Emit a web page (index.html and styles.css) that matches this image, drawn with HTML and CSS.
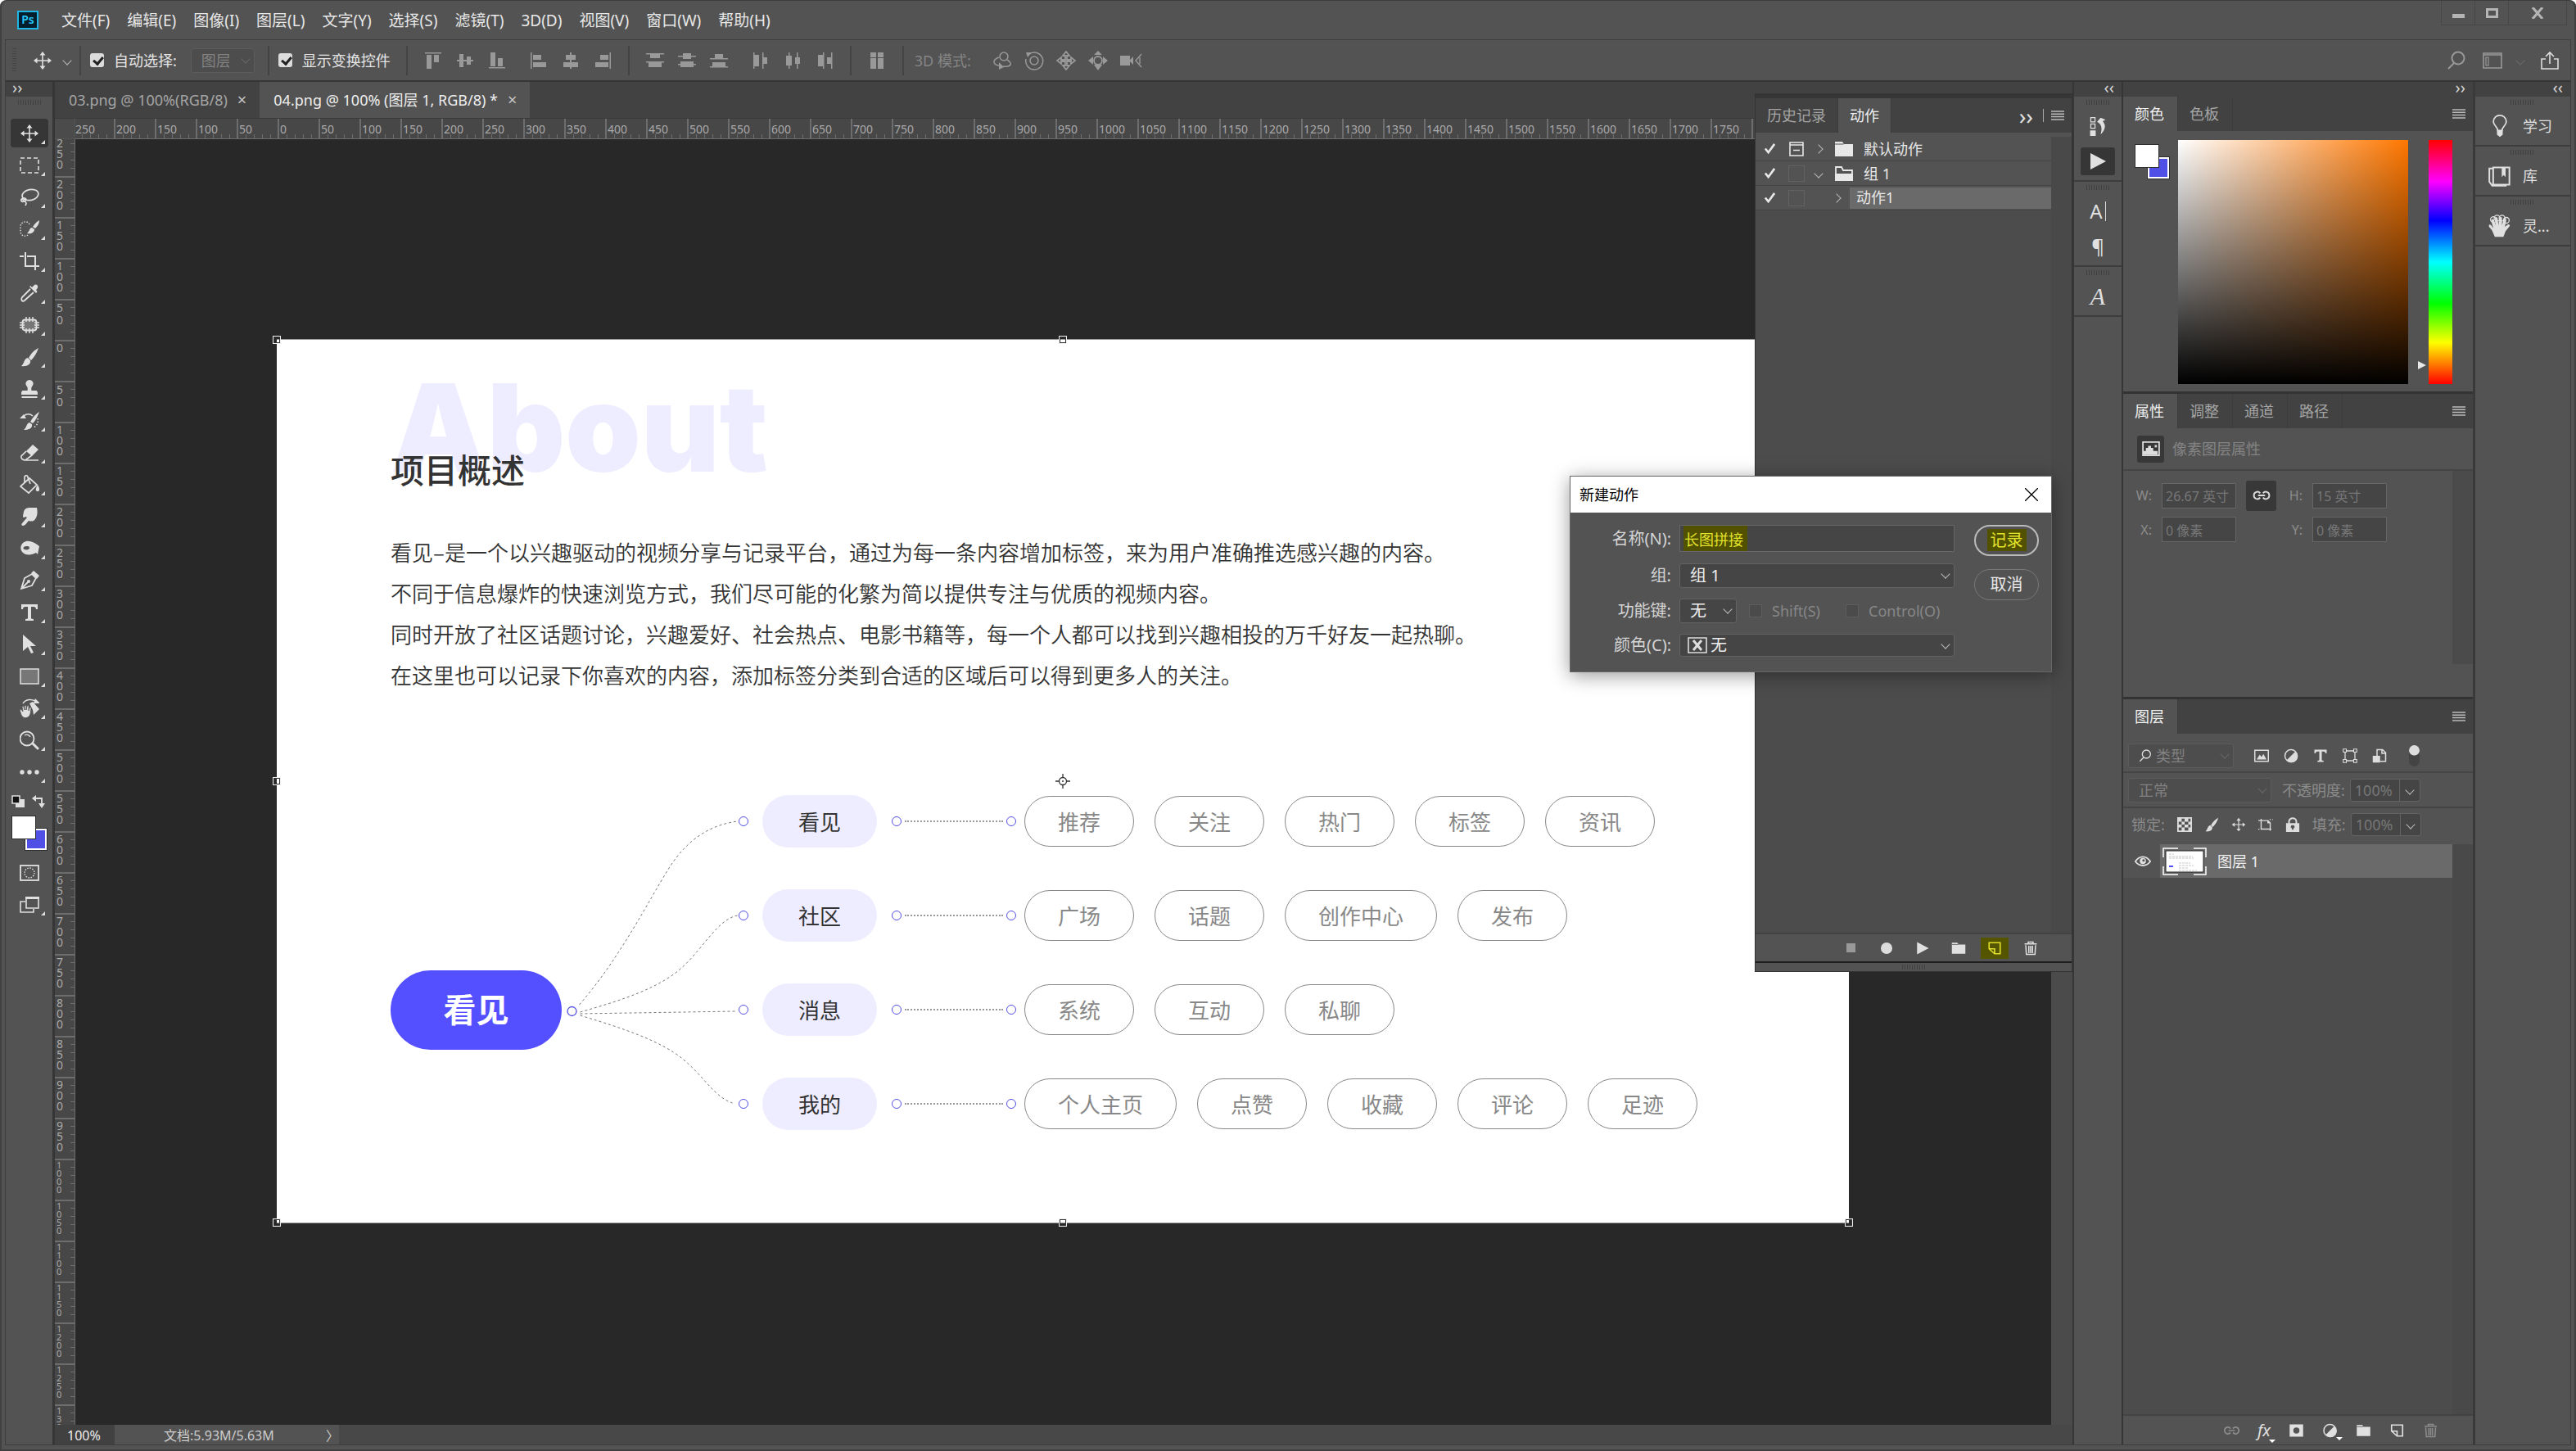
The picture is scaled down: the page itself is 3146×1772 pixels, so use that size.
FILE: index.html
```html
<!DOCTYPE html>
<html lang="zh-CN">
<head>
    <meta charset="UTF-8">
    <meta name="viewport" content="width=device-width, initial-scale=1.0">
    <title>04.png @ 100% (图层 1, RGB/8) *</title>
    <link rel="stylesheet" href="styles.css">
</head>
<body>
    <svg class="sprite" aria-hidden="true">
        <symbol id="i-move" viewBox="0 0 24 24"><path fill="none" stroke="currentColor" stroke-width="1.6" d="M12 3v18M3 12h18"/><path fill="currentColor" d="M12 1l3.5 4.5h-7zM12 23l3.5-4.5h-7zM1 12l4.5-3.5v7zM23 12l-4.5-3.5v7z"/></symbol>
        <symbol id="i-marquee" viewBox="0 0 24 24"><rect x="1" y="3" width="22" height="18" fill="none" stroke="currentColor" stroke-width="1.6" stroke-dasharray="5 3"/></symbol>
        <symbol id="i-lasso" viewBox="0 0 24 24"><g fill="none" stroke="currentColor" stroke-width="1.7"><ellipse cx="13" cy="9" rx="10" ry="6.5" transform="rotate(-12 13 9)"/><path d="M4 13c-4 2-2 5 1 4s4-3 1-4-3 3 0 4 2 3 1 5"/></g></symbol>
        <symbol id="i-quick" viewBox="0 0 24 24"><path fill="none" stroke="currentColor" stroke-width="1.4" stroke-dasharray="1.5 1.7" d="M12 6c-2-5-11-4-11 3v5c0 7 7 7 9 5"/><path fill="currentColor" d="M24 1c-4 2-6 5-8 8l3 2c3-3 5-6 5-10zM15 10c-3 0-3 5-6 7 5 1 9-1 9-5z"/></symbol>
        <symbol id="i-crop" viewBox="0 0 24 24"><path fill="none" stroke="currentColor" stroke-width="2" d="M0 6h5M7 1v17h11M9 6h10v17M20 18h5"/></symbol>
        <symbol id="i-dropper" viewBox="0 0 24 24"><path fill="none" stroke="currentColor" stroke-width="1.8" d="M13 7L3 17c-2 3 0 6 3 4L17 11"/><path fill="currentColor" d="M12 4l8 8 1.5-2-1.5-2c4-3 2-8-2-6l-3 3-1.5-2z"/></symbol>
        <symbol id="i-patch" viewBox="0 0 24 24"><rect x="3.5" y="5.5" width="17" height="13" rx="3" fill="#777" stroke="currentColor" stroke-width="1.8"/><path stroke="currentColor" stroke-width="1.5" d="M8 2v6M12 2v6M16 2v6M8 16v6M12 16v6M16 16v6M0 9h6M0 12h6M0 15h6M18 9h6M18 12h6M18 15h6"/></symbol>
        <symbol id="i-brush" viewBox="0 0 24 24"><path fill="currentColor" d="M23 1c-6 3-9 7-12 12l3 3c4-4 7-9 9-15zM10 13c-5 1-4 7-8 10 7 1 12-2 11-7z"/></symbol>
        <symbol id="i-stamp" viewBox="0 0 24 24"><path fill="currentColor" d="M12 1a4.5 4.5 0 0 1 3.5 7.5c-1.5 2-1.5 3-1 5.5H20q2 0 2 4v1H2v-1q0-4 2-4h5.5c.5-2.5.5-3.5-1-5.5A4.5 4.5 0 0 1 12 1zM2.5 21h19v2h-19z"/></symbol>
        <symbol id="i-history" viewBox="0 0 24 24"><path fill="currentColor" d="M24 1c-5 3-8 7-11 12l3 2c4-4 6-9 8-14zM12 14c-4 1-3 6-7 9 6 0 11-2 10-7zM0 9l5-5 3 5z"/><path fill="none" stroke="currentColor" stroke-width="1.4" d="M5 6c3-3 8-3 11 0"/><path fill="none" stroke="currentColor" stroke-width="1.6" stroke-dasharray="1.5 2" d="M22 9c1 5-1 9-5 11"/></symbol>
        <symbol id="i-eraser" viewBox="0 0 24 24"><path fill="currentColor" d="M16 2l7 6-8 8-7-6z"/><path fill="none" stroke="currentColor" stroke-width="1.7" d="M8 10l-6 6c-1 3 2 5 5 5l8-6M7 21h16"/></symbol>
        <symbol id="i-bucket" viewBox="0 0 24 24"><path fill="none" stroke="currentColor" stroke-width="1.7" d="M12 4L1 14l10 8 10-10zM6 9V3c0-3 4-3 4 0l3 8"/><path fill="currentColor" d="M22 12c3 5 3 8 0 8s-3-3 0-8z"/></symbol>
        <symbol id="i-smudge" viewBox="0 0 24 24"><path fill="currentColor" d="M5 6c1-4 4-5 8-5h8c1 5 1 10-2 14-2 3-5 3-8 2-2 2-4 6-7 6-2 0-2-2-1-3l6-7-2-1c-2 2-3 1-3-1z"/></symbol>
        <symbol id="i-burn" viewBox="0 0 24 24"><path fill="currentColor" fill-rule="evenodd" d="M8 3c5-1 11 2 16 6l-2 10-2-2c-5 3-13 4-17-1C-1 10 3 4 8 3zm0 6c-3 0-5 3-2 4s6 0 6-2-2-2-4-2z"/></symbol>
        <symbol id="i-pen" viewBox="0 0 24 24"><path fill="none" stroke="currentColor" stroke-width="1.8" d="M2 22l4-13 9-5 5 5-5 9zM2 22l8-8"/><circle cx="11" cy="13" r="2" fill="currentColor"/><path fill="currentColor" d="M14 3l3-3 7 6-3 4z"/></symbol>
        <symbol id="i-type" viewBox="0 0 24 24"><path fill="currentColor" d="M2 2h20v6h-2q0-3-3-3h-3v14q0 1 3 1v2H7v-2q3 0 3-1V5H7Q4 5 4 8H2z"/></symbol>
        <symbol id="i-arrow" viewBox="0 0 24 24"><path fill="currentColor" d="M4 0l16 14h-7l4 8-3 1-4-8-6 5z"/></symbol>
        <symbol id="i-rect" viewBox="0 0 24 24"><rect x="1" y="3" width="22" height="18" fill="#777" stroke="currentColor" stroke-width="1.5"/></symbol>
        <symbol id="i-rotate" viewBox="0 0 24 24"><path fill="none" stroke="currentColor" stroke-width="1.5" d="M4 6c4-6 11-5 15-3"/><path fill="currentColor" d="M19 0l6 6h-8zM12 6l4-2 8 9-7 7-1-6z"/><path fill="currentColor" stroke="#535353" stroke-width=".8" d="M0 14q2-2 4 2l-1-6q1-2 2 0l1 4V9q1-2 2 0v5l1-5q2-1 2 0v6l1-4q2-1 2 1l-1 7c-2 6-9 6-11 1z"/></symbol>
        <symbol id="i-zoom" viewBox="0 0 24 24"><g fill="none" stroke="currentColor"><circle cx="9" cy="10" r="8.5" stroke-width="1.8"/><path stroke-width="1.4" d="M6 6c3-2 6 0 7 2"/><path stroke-width="3" stroke-linecap="round" d="M16 16l6 6"/></g></symbol>
        <symbol id="i-dots" viewBox="0 0 24 24"><g fill="currentColor"><circle cx="3" cy="12" r="2.7"/><circle cx="12" cy="12" r="2.7"/><circle cx="21" cy="12" r="2.7"/></g></symbol>
        <symbol id="i-reset" viewBox="0 0 16 16"><path fill="currentColor" d="M5 5h11v10H5z"/><path fill="#111" stroke="currentColor" stroke-width="1.5" d="M1 1h9v9H1z"/></symbol>
        <symbol id="i-swap" viewBox="0 0 16 16"><path fill="none" stroke="currentColor" stroke-width="1.8" d="M4 4h8v8"/><path fill="currentColor" d="M0 4l5-4v8zM12 16L8 10h8z"/></symbol>
        <symbol id="i-mask" viewBox="0 0 24 24"><rect x="1" y="3" width="22" height="18" fill="none" stroke="currentColor" stroke-width="1.8"/><circle cx="12" cy="12" r="6" fill="none" stroke="currentColor" stroke-width="1.4" stroke-dasharray="1.5 1.6"/></symbol>
        <symbol id="i-screen" viewBox="0 0 24 24"><path fill="none" stroke="currentColor" stroke-width="1.6" d="M7 8H1v13h16v-4"/><path fill="#535353" stroke="currentColor" stroke-width="1.6" d="M8 3h15v13H8z"/><path fill="currentColor" d="M7 2h17v3H7z"/></symbol>
        <!-- align and distribute -->
        <symbol id="i-al-top" viewBox="0 0 24 24"><path fill="currentColor" d="M2 2h20v1.5H2zM4 5h6v17H4zM13 5h6v9h-6z"/></symbol>
        <symbol id="i-al-mid" viewBox="0 0 24 24"><path fill="currentColor" d="M2 11h20v2H2zM5 4h5v16H5zM14 7h5v10h-5z"/></symbol>
        <symbol id="i-al-bot" viewBox="0 0 24 24"><path fill="currentColor" d="M2 20h20v1.5H2zM4 2h6v17H4zM13 9h6v10h-6z"/></symbol>
        <symbol id="i-al-left" viewBox="0 0 24 24"><path fill="currentColor" d="M2 2h1.5v20H2zM5 5h10v6H5zM5 14h16v6H5z"/></symbol>
        <symbol id="i-al-cen" viewBox="0 0 24 24"><path fill="currentColor" d="M11 2h2v20h-2zM6 5h12v6H6zM3 14h18v6H3z"/></symbol>
        <symbol id="i-al-right" viewBox="0 0 24 24"><path fill="currentColor" d="M20.5 2H22v20h-1.5zM9 5h10v6H9zM3 14h16v6H3z"/></symbol>
        <symbol id="i-ds-top" viewBox="0 0 24 24"><path fill="currentColor" d="M1 3h22v1.5H1zM6 4h12v5H6zM1 13h22v1.5H1zM4 14h16v6H4z"/></symbol>
        <symbol id="i-ds-mid" viewBox="0 0 24 24"><path fill="currentColor" d="M1 6h22v1.5H1zM7 3h10v7H7zM1 16h22v1.5H1zM4 13h16v7H4z"/></symbol>
        <symbol id="i-ds-bot" viewBox="0 0 24 24"><path fill="currentColor" d="M1 9h22v1.5H1zM7 4h10v6H7zM1 19h22v1.5H1zM4 14h16v6H4z"/></symbol>
        <symbol id="i-ds-left" viewBox="0 0 24 24"><path fill="currentColor" d="M3 2h1.5v20H3zM4 5h6v14H4zM14 2h1.5v20H14zM15 8h5v8h-5z"/></symbol>
        <symbol id="i-ds-cen" viewBox="0 0 24 24"><path fill="currentColor" d="M7 2h1.5v20H7zM4 6h7v12H4zM17 2h1.5v20H17zM15 8h6v8h-6z"/></symbol>
        <symbol id="i-ds-right" viewBox="0 0 24 24"><path fill="currentColor" d="M10 2h1.5v20H10zM4 5h6v14H4zM20 2h1.5v20H20zM15 8h5v8h-5z"/></symbol>
        <symbol id="i-auto" viewBox="0 0 24 24"><path fill="currentColor" d="M4 2h7v6H4zM13 2h7v6h-7zM4 9h7v13H4zM13 9h7v13h-7z"/></symbol>
        <symbol id="i-3d-orbit" viewBox="0 0 24 24"><g fill="none" stroke="currentColor" stroke-width="1.5"><circle cx="14" cy="7" r="5"/><path d="M8 8c-8 3-8 9 0 10M18 11c8 5 4 9-5 8"/></g><path fill="currentColor" d="M8 14v9l6-3z"/></symbol>
        <symbol id="i-3d-roll" viewBox="0 0 24 24"><g fill="none" stroke="currentColor" stroke-width="1.5"><circle cx="12" cy="12" r="5"/><path d="M6 4a10.5 10.5 0 1 1-4 6"/></g><path fill="currentColor" d="M2 2h7l-5 6z"/></symbol>
        <symbol id="i-3d-pan" viewBox="0 0 24 24"><path fill="none" stroke="currentColor" stroke-width="1.8" d="M12 1l4 5h-3v5h5V8l5 4-5 4v-3h-5v5h3l-4 5-4-5h3v-5H6v3l-5-4 5-4v3h5V6H8z"/></symbol>
        <symbol id="i-3d-slide" viewBox="0 0 24 24"><circle cx="12" cy="12" r="5" fill="none" stroke="currentColor" stroke-width="1.8"/><path fill="currentColor" d="M12 0l5 5H7zM12 24l5-7H7zM0 12l6-5v10zM24 12l-6-5v10z"/></symbol>
        <symbol id="i-3d-cam" viewBox="0 0 28 24"><path fill="currentColor" d="M0 6h12v12H0zM11 12l5-5v10z"/><path fill="none" stroke="currentColor" stroke-width="1.4" d="M26 4l-7 8 7 8M24 8v8"/></symbol>
        <symbol id="i-search" viewBox="0 0 24 24"><g fill="none" stroke="currentColor" stroke-width="2"><circle cx="14" cy="9" r="7.5"/><path d="M9 15l-7 7"/></g></symbol>
        <symbol id="i-space" viewBox="0 0 24 24"><path fill="none" stroke="currentColor" stroke-width="1.6" d="M1 3h22v18H1zM1 5h22"/><path fill="none" stroke="currentColor" stroke-width="1.2" d="M4 8h3v10H4z"/></symbol>
        <symbol id="i-share" viewBox="0 0 24 24"><path fill="none" stroke="currentColor" stroke-width="1.6" d="M7 10H2v12h20V10h-5M12 16V2M7 7l5-5 5 5"/></symbol>
        <symbol id="i-folder" viewBox="0 0 24 24"><path fill="currentColor" d="M1 3h9l2 3h11v15H1z"/><path fill="#535353" d="M1 5.5h11l-.7 1H1z"/></symbol>
        <symbol id="i-folder-open" viewBox="0 0 24 24"><path fill="none" stroke="currentColor" stroke-width="1.8" d="M2 13V4h7l2 4h11v5"/><path fill="currentColor" d="M1 12h22v9H1z"/></symbol>
        <symbol id="i-menu" viewBox="0 0 16 12"><path stroke="currentColor" stroke-width="1.5" d="M0 1h16M0 4.3h16M0 7.6h16M0 11h16"/></symbol>
        <symbol id="i-check" viewBox="0 0 16 16"><path fill="none" stroke="currentColor" stroke-width="2.8" d="M2 8l4 5 8-11"/></symbol>
        <symbol id="i-dialogbox" viewBox="0 0 20 20"><path fill="none" stroke="currentColor" stroke-width="1.6" d="M2 2h16v16H2zM2 5h16M6 11.5h8"/></symbol>
        <symbol id="i-hist-panel" viewBox="0 0 24 28"><path fill="none" stroke="currentColor" stroke-width="1.5" d="M2 2h6v6H2zM2 11h6v6H2z"/><path fill="currentColor" d="M1 20h8v8H1zM11 8l5-6 7 3-4 2c5 6 4 12-3 19 2-7 2-12-2-16z"/></symbol>
        <symbol id="i-play" viewBox="0 0 24 24"><path fill="currentColor" d="M3 2l19 10L3 22z"/></symbol>
        <symbol id="i-new" viewBox="0 0 24 24"><path fill="none" stroke="currentColor" stroke-width="2.2" d="M3 3h18v18h-9l-9-8zM3 13h9v8"/></symbol>
        <symbol id="i-trash" viewBox="0 0 24 24"><path fill="none" stroke="currentColor" stroke-width="2" d="M2 5h20M8 5V2h8v3M4 7l1 15h14l1-15M9 8v12M12 8v12M15 8v12"/></symbol>
        <symbol id="i-bulb" viewBox="0 0 24 32"><path fill="none" stroke="currentColor" stroke-width="2" d="M9 22c0-5-6-7-6-12 0-12 18-12 18 0 0 5-6 7-6 12z"/><path fill="currentColor" d="M8 22h8v6l-4 3-4-3z"/></symbol>
        <symbol id="i-book" viewBox="0 0 24 24"><g fill="none" stroke="currentColor" stroke-width="1.7"><path d="M5 3h17v18H5zM5 4H1v14l3 4h15"/></g><path fill="currentColor" d="M14 3h4v10l-2-2-2 2z"/></symbol>
        <symbol id="i-hand" viewBox="0 0 32 32"><path fill="currentColor" d="M9 31l-4-9-4-5c-1-3 1-4 3-2l3 4-3-10c0-3 3-4 4-1l2 7-1-9c0-3 4-3 4 0l1 9 1-10c0-3 4-2 4 0v10l2-8c1-3 4-2 4 1l-2 9 4-3c2-1 4 1 2 3l-5 6-3 8z"/><g fill="none" stroke="currentColor" stroke-width="1.5"><circle cx="7" cy="7" r="4"/><circle cx="12" cy="5" r="4"/><circle cx="19" cy="5" r="4"/><circle cx="25" cy="8" r="4"/></g></symbol>
        <symbol id="i-pic" viewBox="0 0 24 20"><path fill="none" stroke="currentColor" stroke-width="2" d="M1 1h22v18H1z"/><path fill="currentColor" d="M2 18v-5h3V9h3V6h4v3h3v4h6v5zM17 5h3v3h-3z"/></symbol>
        <symbol id="i-link" viewBox="0 0 24 14"><g fill="none" stroke="currentColor" stroke-width="2.2"><path d="M10 4C7 0 1 2 1 7s6 7 9 3M14 4c3-4 9-2 9 3s-6 7-9 3M7 7h10"/></g></symbol>
        <symbol id="i-f-pixel" viewBox="0 0 24 20"><path fill="none" stroke="currentColor" stroke-width="2" d="M1 1h22v18H1z"/><path fill="currentColor" d="M4 16l5-8 3 4 3-5 5 9z"/></symbol>
        <symbol id="i-adjust" viewBox="0 0 24 24"><circle cx="12" cy="12" r="10" fill="none" stroke="currentColor" stroke-width="2"/><path fill="currentColor" d="M19 5A10 10 0 1 1 5 19z"/></symbol>
        <symbol id="i-shape" viewBox="0 0 24 24"><path fill="none" stroke="currentColor" stroke-width="1.7" d="M4 4h16v16H4z"/><path fill="#535353" stroke="currentColor" stroke-width="1.5" d="M1 1h5v5H1zM18 1h5v5h-5zM1 18h5v5H1zM18 18h5v5h-5z"/></symbol>
        <symbol id="i-smart" viewBox="0 0 24 24"><path fill="none" stroke="currentColor" stroke-width="2" d="M8 12V2h9l5 5v14h-9M16 2v6h6"/><path fill="currentColor" d="M1 12h12v11H1z"/></symbol>
        <symbol id="i-checker" viewBox="0 0 20 20"><path fill="none" stroke="currentColor" stroke-width="2" d="M1 1h18v18H1z"/><path fill="currentColor" d="M1 1h5v5H1zM10 1h5v5h-5zM6 6h4v4H6zM15 6h4v4h-4zM1 10h5v4H1zM10 10h5v4h-5zM6 14h4v5H6zM15 14h4v5h-4z"/></symbol>
        <symbol id="i-artboard" viewBox="0 0 26 22"><path fill="none" stroke="currentColor" stroke-width="2" d="M0 4h17l4 4v11H5V1M21 14v8"/><path fill="currentColor" d="M16 3v6h6z"/><path stroke="currentColor" stroke-width="1.8" stroke-dasharray="2 3" d="M20 2h6M0 19h5M21 19h5"/></symbol>
        <symbol id="i-lock" viewBox="0 0 20 20"><path fill="none" stroke="currentColor" stroke-width="2.2" d="M5 9V6c0-6 10-6 10 0v3"/><path fill="currentColor" fill-rule="evenodd" d="M1 8h18v12H1zm9 3a2 2 0 0 0-1 4v2h2v-2a2 2 0 0 0-1-4z"/></symbol>
        <symbol id="i-eye" viewBox="0 0 24 16"><path fill="none" stroke="currentColor" stroke-width="2.2" d="M1 8c6-9 16-9 22 0-6 8-16 8-22 0z"/><circle cx="12" cy="7.5" r="4.5" fill="currentColor"/><circle cx="13" cy="6.5" r="1.8" fill="#535353"/></symbol>
        <symbol id="i-addmask" viewBox="0 0 24 24"><path fill="currentColor" fill-rule="evenodd" d="M1 2h22v20H1zm11 5a5 5 0 1 0 0 10 5 5 0 0 0 0-10z"/></symbol>
    </svg>

    <header class="titlebar">
        <div class="logo">Ps</div>
        <nav class="menu">
            <a href="#">文件(F)</a>
            <a href="#">编辑(E)</a>
            <a href="#">图像(I)</a>
            <a href="#">图层(L)</a>
            <a href="#">文字(Y)</a>
            <a href="#">选择(S)</a>
            <a href="#">滤镜(T)</a>
            <a href="#">3D(D)</a>
            <a href="#">视图(V)</a>
            <a href="#">窗口(W)</a>
            <a href="#">帮助(H)</a>
        </nav>
        <div class="window-buttons">
            <button aria-label="最小化"><span class="min"></span></button>
            <button aria-label="最大化"><span class="max"></span></button>
            <button class="close" aria-label="关闭"><svg width="14" height="14" viewBox="0 0 14 14"><path stroke="currentColor" stroke-width="3" d="M1 0l12 14M13 0L1 14"/></svg></button>
        </div>
    </header>

    <div class="options">
        <span class="grip-v"></span>
        <button class="current-tool" aria-label="移动工具"><svg class="icon"><use href="#i-move"/></svg><i class="chev"></i></button>
        <span class="divider tight"></span>
        <label class="tick"><input type="checkbox" checked>自动选择:</label>
        <span class="select off auto-target"><select aria-label="自动选择对象" disabled><option>图层</option></select></span>
        <span class="divider tight"></span>
        <label class="tick"><input type="checkbox" checked>显示变换控件</label>
        <span class="divider"></span>
        <div class="icon-group">
            <svg class="icon"><use href="#i-al-top"/></svg>
            <svg class="icon"><use href="#i-al-mid"/></svg>
            <svg class="icon"><use href="#i-al-bot"/></svg>
        </div>
        <div class="icon-group">
            <svg class="icon"><use href="#i-al-left"/></svg>
            <svg class="icon"><use href="#i-al-cen"/></svg>
            <svg class="icon"><use href="#i-al-right"/></svg>
        </div>
        <span class="divider"></span>
        <div class="icon-group">
            <svg class="icon"><use href="#i-ds-top"/></svg>
            <svg class="icon"><use href="#i-ds-mid"/></svg>
            <svg class="icon"><use href="#i-ds-bot"/></svg>
        </div>
        <div class="icon-group">
            <svg class="icon"><use href="#i-ds-left"/></svg>
            <svg class="icon"><use href="#i-ds-cen"/></svg>
            <svg class="icon"><use href="#i-ds-right"/></svg>
        </div>
        <span class="divider"></span>
        <div class="icon-group"><svg class="icon"><use href="#i-auto"/></svg></div>
        <span class="divider"></span>
        <span class="mode-3d">3D 模式:</span>
        <div class="icon-group">
            <svg class="icon"><use href="#i-3d-orbit"/></svg>
            <svg class="icon"><use href="#i-3d-roll"/></svg>
            <svg class="icon"><use href="#i-3d-pan"/></svg>
            <svg class="icon"><use href="#i-3d-slide"/></svg>
            <svg class="icon wide"><use href="#i-3d-cam"/></svg>
        </div>
        <div class="options-right">
            <button aria-label="搜索"><svg class="icon"><use href="#i-search"/></svg></button>
            <button aria-label="工作区"><svg class="icon"><use href="#i-space"/></svg><i class="chev dim"></i></button>
            <button class="bright" aria-label="共享"><svg class="icon"><use href="#i-share"/></svg></button>
        </div>
    </div>

    <div class="workspace">
        <aside class="toolbox">
            <div class="dock-head left">››</div>
            <div class="grip"></div>
            <div class="tools">
                <button class="active" aria-label="移动"><svg class="icon"><use href="#i-move"/></svg></button>
                <button aria-label="矩形选框"><svg class="icon"><use href="#i-marquee"/></svg></button>
                <button aria-label="套索"><svg class="icon"><use href="#i-lasso"/></svg></button>
                <button aria-label="快速选择"><svg class="icon"><use href="#i-quick"/></svg></button>
                <button aria-label="裁剪"><svg class="icon"><use href="#i-crop"/></svg></button>
                <button aria-label="吸管"><svg class="icon"><use href="#i-dropper"/></svg></button>
                <button aria-label="修补"><svg class="icon"><use href="#i-patch"/></svg></button>
                <button aria-label="画笔"><svg class="icon"><use href="#i-brush"/></svg></button>
                <button aria-label="仿制图章"><svg class="icon"><use href="#i-stamp"/></svg></button>
                <button aria-label="历史记录画笔"><svg class="icon"><use href="#i-history"/></svg></button>
                <button aria-label="橡皮擦"><svg class="icon"><use href="#i-eraser"/></svg></button>
                <button aria-label="油漆桶"><svg class="icon"><use href="#i-bucket"/></svg></button>
                <button aria-label="涂抹"><svg class="icon"><use href="#i-smudge"/></svg></button>
                <button aria-label="加深"><svg class="icon"><use href="#i-burn"/></svg></button>
                <button aria-label="钢笔"><svg class="icon"><use href="#i-pen"/></svg></button>
                <button aria-label="文字"><svg class="icon"><use href="#i-type"/></svg></button>
                <button aria-label="路径选择"><svg class="icon"><use href="#i-arrow"/></svg></button>
                <button aria-label="矩形"><svg class="icon"><use href="#i-rect"/></svg></button>
                <button aria-label="旋转视图"><svg class="icon"><use href="#i-rotate"/></svg></button>
                <button aria-label="缩放"><svg class="icon"><use href="#i-zoom"/></svg></button>
                <button aria-label="更多"><svg class="icon"><use href="#i-dots"/></svg></button>
            </div>
            <div class="swatch-actions">
                <svg><use href="#i-reset"/></svg>
                <svg><use href="#i-swap"/></svg>
            </div>
            <div class="swatches"><span class="bg"></span><span class="fg"></span></div>
            <div class="tools">
                <button class="plain" aria-label="快速蒙版"><svg class="icon"><use href="#i-mask"/></svg></button>
                <button aria-label="屏幕模式"><svg class="icon"><use href="#i-screen"/></svg></button>
            </div>
        </aside>

        <main class="document">
            <div class="doc-tabs">
                <button class="doc-tab">03.png @ 100%(RGB/8)<span class="x">×</span></button>
                <button class="doc-tab active">04.png @ 100% (图层 1, RGB/8) *<span class="x">×</span></button>
            </div>
            <div class="ruler-row">
                <div class="ruler-corner"></div>
                <div class="ruler-h" id="rulerH"></div>
            </div>
            <div class="stage">
                <div class="ruler-v" id="rulerV"></div>
                <div class="canvas">
                    <article class="page">
                        <p class="about">About</p>
                        <h1>项目概述</h1>
                        <div class="intro">
                            <p>看见–是一个以兴趣驱动的视频分享与记录平台，通过为每一条内容增加标签，来为用户准确推选感兴趣的内容。</p>
                            <p>不同于信息爆炸的快速浏览方式，我们尽可能的化繁为简以提供专注与优质的视频内容。</p>
                            <p>同时开放了社区话题讨论，兴趣爱好、社会热点、电影书籍等，每一个人都可以找到兴趣相投的万千好友一起热聊。</p>
                            <p>在这里也可以记录下你喜欢的内容，添加标签分类到合适的区域后可以得到更多人的关注。</p>
                        </div>
                        <div class="tree">
                            <div class="root">看见</div>
                            <svg class="branches" viewBox="0 0 215 410">
                                <g fill="none" stroke="#777" stroke-width="1" stroke-dasharray="3 3">
                                    <path d="M21 256C70 200 105 130 130 90S185 36 214 32"/>
                                    <path d="M22 265C75 250 120 235 147 210S190 152 214 147"/>
                                    <path d="M22 267L212 264"/>
                                    <path d="M22 269C75 285 120 300 147 322S185 368 208 376"/>
                                </g>
                                <circle cx="12" cy="264" r="5.5" fill="#fff" stroke="#5550e0" stroke-width="1.3"/>
                            </svg>
                            <div class="rows">
                                <div class="row"><i class="dot"></i><b>看见</b><i class="dot"></i><i class="dots"></i><i class="dot"></i><span>推荐</span><span>关注</span><span>热门</span><span>标签</span><span>资讯</span></div>
                                <div class="row"><i class="dot"></i><b>社区</b><i class="dot"></i><i class="dots"></i><i class="dot"></i><span>广场</span><span>话题</span><span>创作中心</span><span>发布</span></div>
                                <div class="row"><i class="dot"></i><b>消息</b><i class="dot"></i><i class="dots"></i><i class="dot"></i><span>系统</span><span>互动</span><span>私聊</span></div>
                                <div class="row"><i class="dot"></i><b>我的</b><i class="dot"></i><i class="dots"></i><i class="dot"></i><span>个人主页</span><span>点赞</span><span>收藏</span><span>评论</span><span>足迹</span></div>
                            </div>
                        </div>
                        <i class="handle tl"></i><i class="handle tc"></i><i class="handle ml"></i>
                        <i class="handle bl"></i><i class="handle bc"></i><i class="handle br"></i>
                        <svg class="pivot" viewBox="0 0 18 18"><g fill="none" stroke="#333" stroke-width="1.3"><circle cx="9" cy="9" r="4.5"/><path d="M9 0v5M9 13v5M0 9h5M13 9h5M8 9h2"/></g></svg>
                    </article>
                </div>
                <div class="scroll-v"></div>
            </div>
            <div class="status">
                <span class="zoom">100%</span>
                <span class="size">文档:5.93M/5.63M<i>〉</i></span>
            </div>

            <section class="actions">
                <div class="tabs">
                    <button>历史记录</button><button class="active">动作</button>
                    <span class="more">››<i></i><svg><use href="#i-menu"/></svg></span>
                </div>
                <ul class="action-list">
                    <li>
                        <svg class="chk"><use href="#i-check"/></svg>
                        <svg class="dlg"><use href="#i-dialogbox"/></svg>
                        <i class="chev right"></i>
                        <svg class="fold"><use href="#i-folder"/></svg>
                        <span>默认动作</span>
                    </li>
                    <li>
                        <svg class="chk"><use href="#i-check"/></svg>
                        <span class="dlg empty"></span>
                        <i class="chev"></i>
                        <svg class="fold"><use href="#i-folder-open"/></svg>
                        <span>组 1</span>
                    </li>
                    <li class="child">
                        <svg class="chk"><use href="#i-check"/></svg>
                        <span class="dlg empty"></span>
                        <i class="chev right"></i>
                        <span class="selected">动作1</span>
                    </li>
                </ul>
                <div class="actions-foot">
                    <button class="stop" aria-label="停止"><i></i></button>
                    <button class="rec" aria-label="开始记录"><i></i></button>
                    <button aria-label="播放"><svg><use href="#i-play"/></svg></button>
                    <button aria-label="新建组"><svg><use href="#i-folder"/></svg></button>
                    <button class="marked" aria-label="新建动作"><svg><use href="#i-new"/></svg></button>
                    <button aria-label="删除"><svg><use href="#i-trash"/></svg></button>
                </div>
                <div class="resize"><span class="grip"></span></div>
            </section>

            <form class="dialog">
                <div class="dialog-title">新建动作
                    <button type="button" aria-label="关闭"><svg width="16" height="16" viewBox="0 0 16 16"><path stroke="#000" stroke-width="1.3" d="M0 0l16 16M16 0L0 16"/></svg></button>
                </div>
                <div class="dialog-body">
                    <div class="fields">
                        <label for="name">名称(N):</label>
                        <input id="name" class="name" type="text" value="长图拼接">
                        <label for="set">组:</label>
                        <span class="select"><select id="set"><option>组 1</option></select></span>
                        <label for="fkey">功能键:</label>
                        <div class="keys">
                            <span class="select short"><select id="fkey"><option>无</option></select></span>
                            <label><input type="checkbox" disabled>Shift(S)</label>
                            <label><input type="checkbox" disabled>Control(O)</label>
                        </div>
                        <label for="color">颜色(C):</label>
                        <span class="select none-color"><svg viewBox="0 0 24 20"><path fill="none" stroke="#ddd" stroke-width="1.6" d="M1 1h22v18H1z"/><path stroke="#ddd" stroke-width="3" d="M7 4l10 12M17 4L7 16"/></svg><select id="color"><option>无</option></select></span>
                    </div>
                    <div class="dialog-buttons">
                        <button type="button" class="primary"><mark>记录</mark></button>
                        <button type="button">取消</button>
                    </div>
                </div>
            </form>
        </main>

        <aside class="icon-dock">
            <div class="dock-head">‹‹</div>
            <div class="dock-group">
                <span class="grip"></span>
                <button aria-label="历史记录"><svg class="icon"><use href="#i-hist-panel"/></svg></button>
                <button class="active" aria-label="动作"><svg class="icon"><use href="#i-play"/></svg></button>
            </div>
            <div class="dock-group">
                <span class="grip"></span>
                <button class="glyph" aria-label="字符"><span class="caret">A</span></button>
                <button class="glyph" aria-label="段落">¶</button>
            </div>
            <div class="dock-group">
                <span class="grip"></span>
                <button class="glyph script" aria-label="字形">A</button>
            </div>
        </aside>

        <aside class="panels">
            <div class="dock-head">››</div>
            <section class="panel">
                <div class="tabs"><button class="active">颜色</button><button>色板</button><span class="more"><svg><use href="#i-menu"/></svg></span></div>
                <div class="color-body">
                    <div class="swatches"><span class="bg"></span><span class="fg"></span></div>
                    <div class="color-field"></div>
                    <div class="hue"><i></i></div>
                </div>
            </section>
            <section class="panel">
                <div class="tabs"><button class="active">属性</button><button>调整</button><button>通道</button><button>路径</button><span class="more"><svg><use href="#i-menu"/></svg></span></div>
                <div class="props-head"><span class="dark-btn"><svg width="22" height="18"><use href="#i-pic"/></svg></span>像素图层属性</div>
                <div class="props-body">
                    <div class="props-grid">
                        <label for="pw">W:</label><input id="pw" type="text" value="26.67 英寸" disabled>
                        <button class="dark-btn link" aria-label="链接"><svg width="22" height="12"><use href="#i-link"/></svg></button>
                        <label for="ph">H:</label><input id="ph" type="text" value="15 英寸" disabled>
                        <label for="px">X:</label><input id="px" type="text" value="0 像素" disabled>
                        <span></span>
                        <label for="py">Y:</label><input id="py" type="text" value="0 像素" disabled>
                    </div>
                    <div class="props-scroll"></div>
                </div>
            </section>
            <section class="panel layers">
                <div class="tabs"><button class="active">图层</button><span class="more"><svg><use href="#i-menu"/></svg></span></div>
                <div class="filter-row">
                    <span class="select off kind"><svg><use href="#i-search"/></svg><select aria-label="类型" disabled><option>类型</option></select></span>
                    <svg class="f"><use href="#i-f-pixel"/></svg>
                    <svg class="f"><use href="#i-adjust"/></svg>
                    <svg class="f"><use href="#i-type"/></svg>
                    <svg class="f"><use href="#i-shape"/></svg>
                    <svg class="f"><use href="#i-smart"/></svg>
                    <span class="toggle"></span>
                </div>
                <div class="blend-row">
                    <span class="select off blend"><select aria-label="混合模式" disabled><option>正常</option></select></span>
                    <label for="op">不透明度:</label>
                    <span class="percent"><input id="op" type="text" value="100%" disabled><i class="chev"></i></span>
                </div>
                <div class="lock-row">
                    <span class="lock-label">锁定:</span>
                    <svg><use href="#i-checker"/></svg>
                    <svg><use href="#i-brush"/></svg>
                    <svg><use href="#i-move"/></svg>
                    <svg><use href="#i-artboard"/></svg>
                    <svg><use href="#i-lock"/></svg>
                    <label for="fill">填充:</label>
                    <span class="percent"><input id="fill" type="text" value="100%" disabled><i class="chev"></i></span>
                </div>
                <div class="layer-list">
                    <div class="layer">
                        <svg class="eye"><use href="#i-eye"/></svg>
                        <div class="layer-name">
                            <svg class="thumb" viewBox="0 0 54 34">
                                <path fill="none" stroke="#fff" stroke-width="1.5" d="M1 12V1h18M38 1h15v11M1 23v10h18M38 33h15V23"/>
                                <path fill="#fff" stroke="#222" d="M4 4h46v26H4z"/>
                                <path stroke="#bbb" stroke-width=".8" stroke-dasharray="3 1" d="M8 8h6M8 11h29M8 13h30M20 19h14M20 22h18M20 25h12M20 28h22"/>
                                <rect x="8" y="22" width="5" height="2" fill="#5550ff"/>
                            </svg>
                            图层 1
                        </div>
                    </div>
                </div>
                <div class="layers-foot">
                    <svg class="dim"><use href="#i-link"/></svg>
                    <em class="drop">fx</em>
                    <svg><use href="#i-addmask"/></svg>
                    <span class="drop"><svg><use href="#i-adjust"/></svg></span>
                    <svg><use href="#i-folder"/></svg>
                    <svg><use href="#i-new"/></svg>
                    <svg class="dim"><use href="#i-trash"/></svg>
                </div>
            </section>
        </aside>

        <aside class="side-dock">
            <div class="dock-head">‹‹</div>
            <button><span class="grip"></span><svg><use href="#i-bulb"/></svg>学习</button>
            <button><span class="grip"></span><svg><use href="#i-book"/></svg>库</button>
            <button><span class="grip"></span><svg><use href="#i-hand"/></svg>灵...</button>
        </aside>
    </div>

    <script>
        const rulerH = document.getElementById('rulerH');
        const rulerV = document.getElementById('rulerV');

        // one label every 50px, counted from the corner of the image
        for (let n = -250; n <= 1750; n += 50) {
            const mark = document.createElement('span');
            mark.textContent = Math.abs(n);
            rulerH.appendChild(mark);
        }

        for (let n = -250; n <= 1300; n += 50) {
            const mark = document.createElement('span');
            const digits = String(Math.abs(n));
            mark.className = 'd' + digits.length;
            for (const d of digits) {
                const line = document.createElement('i');
                line.textContent = d;
                mark.appendChild(line);
            }
            rulerV.appendChild(mark);
        }
    </script>
</body>
</html>
```

FILE: styles.css
```css
* {
    box-sizing: border-box;
}

html {
    height: 100%;
    background: #fff;
}

body {
    height: 100%;
    margin: 0;
    padding: 0 6px 7px;
    display: flex;
    flex-direction: column;
    overflow: hidden;
    background: #535353;
    border-top: 1px solid #3d3d3d;
    border-radius: 8px 8px 0 0;
    color: #e0e0e0;
    font-family: "Noto Sans", "Noto Sans CJK SC", sans-serif;
    font-size: 18px;
    line-height: 24px;
    box-shadow: inset 2px 0 #414141, inset -2px 0 #414141, inset 0 -2px #414141;
}

.sprite {
    position: absolute;
    width: 0;
    height: 0;
}

button, input, select {
    margin: 0;
    padding: 0;
    border: 0;
    background: none;
    color: inherit;
    font: inherit;
}

button {
    cursor: pointer;
}

i {
    font-style: normal;
}

svg {
    display: block;
    flex: none;
}

.icon {
    width: 24px;
    height: 24px;
}

/* ---------- title bar ---------- */
.titlebar {
    display: flex;
    align-items: center;
    height: 47px;
    padding-left: 15px;
}

.logo {
    width: 26px;
    height: 23px;
    margin-right: 28px;
    border: 2px solid #1fb6e8;
    background: #021d2b;
    color: #26c9ff;
    font-size: 14px;
    font-weight: 600;
    line-height: 18px;
    text-align: center;
}

.menu {
    display: flex;
    gap: 21px;
    font-size: 19px;
}

.menu a {
    color: #e8e8e8;
    text-decoration: none;
}

.window-buttons {
    display: flex;
    align-self: flex-start;
    height: 30px;
    margin-left: auto;
    margin-right: 5px;
    border: 1px solid #474747;
    border-top: 0;
    color: #b4b4b4;
}

.window-buttons button {
    display: flex;
    align-items: center;
    justify-content: center;
    width: 41px;
    border-right: 1px solid #474747;
}

.window-buttons .close {
    width: 70px;
    border: 0;
}

.min {
    width: 15px;
    height: 5px;
    margin-top: 8px;
    background: #b4b4b4;
}

.max {
    width: 15px;
    height: 12px;
    border: 3px solid #b4b4b4;
}

/* ---------- options bar ---------- */
.options {
    display: flex;
    align-items: center;
    height: 52px;
    border: 1px solid #3f3f3f;
    border-bottom: 2px solid #363636;
    color: #999;
}

.grip-v {
    width: 5px;
    height: 30px;
    margin: 0 20px 0 8px;
    background: repeating-linear-gradient(#444 0 1px, transparent 1px 3px);
}

.current-tool {
    display: flex;
    align-items: center;
    gap: 14px;
    color: #e0e0e0;
}

.chev {
    flex: none;
    width: 8px;
    height: 8px;
    border: solid #b8b8b8;
    border-width: 0 1px 1px 0;
    transform: rotate(45deg);
}

.chev.right {
    transform: rotate(-45deg);
}

.chev.dim {
    border-color: #6a6a6a;
}

.divider {
    width: 2px;
    height: 36px;
    margin: 0 19px;
    background: #434343;
}

.divider.tight {
    margin: 0 11px;
}

.tick {
    display: flex;
    align-items: center;
    gap: 12px;
    color: #e4e4e4;
}

.tick input {
    appearance: none;
    width: 17px;
    height: 17px;
    border-radius: 3px;
    background: #dcdcdc;
    position: relative;
}

.tick input::after {
    content: "";
    position: absolute;
    left: 6px;
    top: 2px;
    width: 5px;
    height: 9px;
    border: solid #222;
    border-width: 0 3px 3px 0;
    transform: rotate(40deg);
}

.select {
    position: relative;
    display: inline-flex;
    align-items: center;
    height: 30px;
    border: 1px solid #636363;
    border-radius: 3px;
    background: #454545;
}

.select select {
    appearance: none;
    width: 100%;
    height: 100%;
    padding: 0 30px 0 12px;
    color: #eee;
    opacity: 1;
}

.select::after {
    content: "";
    position: absolute;
    right: 6px;
    top: 8px;
    width: 7px;
    height: 7px;
    border: solid #bbb;
    border-width: 0 1px 1px 0;
    transform: rotate(45deg);
}

.select.off {
    border-color: #5c5c5c;
    background: #4d4d4d;
}

.select.off select {
    color: #828282;
}

.select.off::after {
    border-color: #686868;
}

.auto-target {
    width: 78px;
    margin: 0 5px 0 17px;
}

.icon-group {
    display: flex;
    gap: 15px;
}

.icon-group + .icon-group {
    margin-left: 27px;
}

.icon.wide {
    width: 28px;
}

.mode-3d {
    margin: 0 26px 0 -6px;
    color: #858585;
}

.options-right {
    display: flex;
    align-items: center;
    gap: 20px;
    margin-left: auto;
    margin-right: 13px;
}

.options-right button {
    display: flex;
    align-items: center;
    gap: 18px;
}

.options-right .bright {
    color: #ddd;
}

/* ---------- workspace ---------- */
.workspace {
    flex: 1;
    display: flex;
    min-height: 0;
    border: 1px solid #3d3d3d;
    border-top: 0;
    border-right: 0;
}

.dock-head {
    height: 18px;
    padding-right: 9px;
    background: #424242;
    color: #d5d5d5;
    font-size: 20px;
    line-height: 14px;
    text-align: right;
}

.dock-head.left {
    padding-left: 8px;
    text-align: left;
}

.grip {
    display: block;
    width: 28px;
    height: 6px;
    margin: 4px auto 0;
    background: repeating-linear-gradient(90deg, #404040 0 1px, transparent 1px 3px);
}

.toolbox {
    flex: none;
    width: 60px;
    border-right: 3px solid #363636;
}

.toolbox .grip {
    margin-bottom: 17px;
}

.tools {
    display: flex;
    flex-direction: column;
    align-items: center;
    gap: 4px;
}

.tools button {
    position: relative;
    display: flex;
    align-items: center;
    justify-content: center;
    width: 46px;
    height: 35px;
    border-radius: 4px;
}

.tools button::after {
    content: "";
    position: absolute;
    right: 4px;
    bottom: 4px;
    border-left: 5px solid transparent;
    border-bottom: 5px solid #ddd;
}

.tools .plain::after {
    display: none;
}

.tools .active {
    background: #363636;
}

.swatch-actions {
    display: flex;
    justify-content: space-between;
    margin: 11px 9px 9px 7px;
}

.swatch-actions svg {
    width: 16px;
    height: 16px;
}

.swatches {
    position: relative;
    width: 44px;
    height: 43px;
    margin: 0 0 9px 7px;
}

.swatches span {
    position: absolute;
    width: 30px;
    height: 29px;
    border: 1px solid #2e2e2e;
}

.swatches .fg {
    left: 0;
    top: 0;
    background: #fff;
}

.swatches .bg {
    right: 0;
    bottom: 0;
    width: 28px;
    height: 28px;
    background: #504fe6;
    box-shadow: inset 0 0 0 2px #fff;
}

/* ---------- document ---------- */
.document {
    position: relative;
    flex: 1;
    min-width: 0;
    display: flex;
    flex-direction: column;
    background: #424242;
}

.doc-tabs {
    display: flex;
    height: 45px;
    border-bottom: 1px solid #3a3a3a;
}

.doc-tab {
    display: flex;
    align-items: center;
    gap: 12px;
    padding: 0 16px 0 17px;
    color: #a5a5a5;
}

.doc-tab.active {
    background: #535353;
    color: #eee;
}

.doc-tab .x {
    color: #c4c4c4;
    font-size: 20px;
}

.ruler-row {
    display: flex;
    height: 25px;
}

.ruler-corner {
    flex: none;
    width: 25px;
    background: #4b4b4b;
    border: 1px dotted #5c5c5c;
    border-width: 0 1px 1px 0;
}

.ruler-h {
    flex: 1;
    display: flex;
    overflow: hidden;
    background:
        linear-gradient(90deg, #6d6d6d 2px, transparent 2px) 47px 0 / 50px 100% repeat-x,
        linear-gradient(90deg, #6d6d6d 1px, transparent 1px) 8px 100% / 10px 5px repeat-x,
        #474747;
    border-bottom: 1px solid #6d6d6d;
    color: #aaa;
    font-size: 14px;
    line-height: 26px;
}

.ruler-h span {
    flex: 0 0 50px;
    position: relative;
    left: -3px;
    padding-left: 3px;
}

.stage {
    flex: 1;
    display: flex;
    min-height: 0;
}

.ruler-v {
    flex: none;
    width: 25px;
    overflow: hidden;
    background:
        linear-gradient(#6d6d6d 2px, transparent 2px) 0 45px / 100% 50px repeat-y,
        linear-gradient(#6d6d6d 1px, transparent 1px) 100% 5px / 5px 10px repeat-y,
        #474747;
    border-right: 1px solid #6d6d6d;
    color: #aaa;
    font-size: 14px;
    line-height: 13px;
}

.ruler-v span {
    position: relative;
    top: -5px;
    display: block;
    height: 50px;
    padding: 3px 0 0 2px;
}

.ruler-v i {
    display: block;
}

.ruler-v .d2 {
    line-height: 15px;
}

.ruler-v .d4 {
    font-size: 11px;
    line-height: 10px;
}

.canvas {
    position: relative;
    flex: 1;
    overflow: hidden;
    background: #282828;
}

.scroll-v {
    width: 26px;
    background: #4b4b4b;
}

.status {
    display: flex;
    height: 24px;
    background: #484848;
    font-size: 16px;
    line-height: 26px;
}

.zoom {
    width: 73px;
    padding-left: 15px;
    background: #414141;
    color: #eee;
}

.size {
    display: flex;
    justify-content: space-between;
    width: 274px;
    padding-left: 60px;
    background: #535353;
    color: #ccc;
}

/* ---------- the image being edited ---------- */
.page {
    position: absolute;
    left: 246px;
    top: 244px;
    width: 1920px;
    height: 1080px;
    padding: 0 139px;
    background: #fff;
    border-top: 1px solid #999;
    border-bottom: 1px solid #999;
    color: #333;
    font-family: "Noto Sans CJK SC", sans-serif;
}

.page p, .page h1 {
    margin: 0;
}

.about {
    padding-top: 8px;
    color: #eeecff;
    font-family: Inter, sans-serif;
    font-size: 148px;
    font-weight: 900;
    line-height: 200px;
}

.page h1 {
    position: relative;
    margin-top: -81px;
    font-size: 41px;
    font-weight: 500;
    line-height: 60px;
}

.intro {
    margin-top: 47px;
    font-size: 26px;
    font-weight: 350;
    line-height: 50px;
    white-space: nowrap;
}

.tree {
    display: flex;
    margin-top: 122px;
    font-size: 26px;
}

.root {
    width: 209px;
    height: 97px;
    margin-top: 214px;
    border-radius: 49px;
    background: #5550ff;
    color: #fff;
    font-size: 40px;
    font-weight: 700;
    line-height: 93px;
    text-align: center;
}

.branches {
    width: 216px;
    height: 410px;
}

.rows {
    display: flex;
    flex-direction: column;
    gap: 51px;
}

.row {
    display: flex;
    align-items: center;
    height: 64px;
}

.row b {
    width: 140px;
    margin: 0 18px 0 17px;
    border-radius: 32px;
    background: #eeecff;
    font-weight: 400;
    line-height: 64px;
    text-align: center;
}

.row span {
    margin-right: 25px;
    padding: 0 40px;
    border: 1px solid #888;
    border-radius: 31px;
    color: #888;
    line-height: 60px;
}

.dot {
    width: 12px;
    height: 12px;
    border: 1px solid #5550e0;
    border-radius: 50%;
}

.dots {
    width: 120px;
    margin: 0 4px;
    border-top: 2px dotted #999;
}

.dots + .dot {
    margin-right: 10px;
}

.handle {
    position: absolute;
    width: 10px;
    height: 10px;
    margin: -5px;
    border: 1px solid #eee;
    outline: 1px solid #333;
    outline-offset: -2px;
}

.tl { left: 0; top: 0; }
.tc { left: 50%; top: 0; }
.ml { left: 0; top: 50%; }
.bl { left: 0; top: 100%; }
.bc { left: 50%; top: 100%; }
.br { left: 100%; top: 100%; }

.pivot {
    position: absolute;
    left: 50%;
    top: 50%;
    width: 18px;
    height: 18px;
    margin: -9px;
}

/* ---------- tabs shared by the panels ---------- */
.tabs {
    display: flex;
    height: 42px;
    background: #424242;
}

.tabs button {
    padding: 0 14px;
    color: #a5a5a5;
    border-right: 1px solid #3c3c3c;
}

.panel .tabs button {
    padding-right: 16px;
}

.tabs .active {
    background: #535353;
    color: #f0f0f0;
}

.more {
    display: flex;
    align-items: center;
    gap: 9px;
    margin-left: auto;
    margin-right: 9px;
    font-size: 28px;
}

.more svg {
    width: 16px;
    height: 12px;
    color: #bbb;
}

.more i {
    width: 1px;
    height: 16px;
    margin-left: 3px;
    background: #aaa;
}

/* ---------- actions panel ---------- */
.actions {
    position: absolute;
    right: 0;
    top: 14px;
    width: 388px;
    height: 1073px;
    display: flex;
    flex-direction: column;
    border: 1px solid #333;
    border-top: 6px solid #363636;
    background: #535353;
}

.action-list {
    flex: 1;
    margin: 5px 0 0;
    padding: 0;
    list-style: none;
    background: #4c4c4c;
    border-right: 25px solid #494949;
}

.action-list li {
    display: flex;
    align-items: center;
    height: 30px;
    border-bottom: 1px solid #444;
    background: #535353;
    color: #e8e8e8;
}

.chk {
    width: 15px;
    height: 15px;
    margin: 0 15px 0 10px;
}

.dlg {
    width: 20px;
    height: 20px;
    margin-right: 13px;
}

.empty {
    border: 1px solid #626262;
}

.fold {
    width: 24px;
    height: 24px;
    margin: 0 12px 0 15px;
}

.action-list .child .chev {
    margin: 0 12px 0 22px;
}

.selected {
    flex: 1;
    height: 26px;
    padding-left: 8px;
    background: #6a6a6a;
}

.actions-foot {
    display: flex;
    align-items: center;
    justify-content: flex-end;
    gap: 10px;
    height: 37px;
    padding-right: 33px;
    border-top: 2px solid #424242;
    border-bottom: 2px solid #1e1e1e;
}

.actions-foot button {
    display: flex;
    align-items: center;
    justify-content: center;
    width: 34px;
    height: 26px;
}

.actions-foot svg {
    width: 18px;
    height: 18px;
}

.actions-foot .stop i {
    width: 11px;
    height: 11px;
    background: #999;
}

.actions-foot .rec i {
    width: 14px;
    height: 14px;
    border-radius: 50%;
    background: #ddd;
}

.actions-foot .marked {
    background: #555500;
    color: #dede2c;
}

.resize {
    height: 10px;
}

.resize .grip {
    margin-top: 2px;
}

/* ---------- new action dialog ---------- */
.dialog {
    position: absolute;
    right: 25px;
    top: 481px;
    width: 589px;
    border: 1px solid #666;
    background: #535353;
    box-shadow: 0 4px 22px rgba(0, 0, 0, 0.4);
    font-size: 20px;
}

.dialog-title {
    display: flex;
    align-items: center;
    justify-content: space-between;
    height: 44px;
    padding: 0 16px 0 11px;
    background: #fff;
    color: #000;
    font-size: 18px;
}

.dialog-body {
    display: flex;
    gap: 24px;
    padding: 15px 15px 18px 49px;
}

.fields {
    flex: 1;
    display: grid;
    grid-template-columns: 74px 1fr;
    grid-template-rows: 33px 29px 29px 28px;
    gap: 14px 10px;
    align-items: center;
    color: #d5d5d5;
}

.fields > label {
    text-align: right;
    white-space: nowrap;
}

.fields > .select {
    width: 100%;
}

.name {
    width: 100%;
    height: 33px;
    padding-left: 5px;
    border: 1px solid #666;
    background: linear-gradient(#515100, #515100) 4px 0 / 78px 100% no-repeat #454545;
    color: #e3e32b;
    font-size: 18px;
}

.keys {
    display: flex;
    align-items: center;
}

.short {
    width: 70px;
}

.keys label {
    display: flex;
    align-items: center;
    gap: 12px;
    margin-left: 15px;
    color: #878787;
    font-size: 18px;
}

.keys label + label {
    margin-left: 31px;
}

.keys input {
    appearance: none;
    width: 16px;
    height: 16px;
    border: 1px solid #5d5d5d;
    background: #4b4b4b;
}

.fields .none-color {
    height: 28px;
}

.none-color svg {
    width: 24px;
    height: 20px;
    margin-left: 9px;
}

.none-color select {
    padding-left: 4px;
}

.dialog-buttons {
    display: flex;
    flex-direction: column;
    gap: 16px;
}

.dialog-buttons button {
    width: 79px;
    height: 38px;
    border: 1px solid #777;
    border-radius: 19px;
    color: #e8e8e8;
}

.dialog-buttons .primary {
    border: 2px solid #bbb;
}

mark {
    padding: 0 4px;
    background: #515100;
    color: #e3e32b;
}

/* ---------- icon dock ---------- */
.icon-dock {
    flex: none;
    width: 60px;
    border-left: 2px solid #363636;
}

.dock-group {
    display: flex;
    flex-direction: column;
    align-items: center;
    gap: 9px;
    padding-bottom: 6px;
    border-bottom: 2px solid #3d3d3d;
}

.dock-group button {
    display: flex;
    align-items: center;
    justify-content: center;
    width: 42px;
    height: 34px;
}

.dock-group .active {
    border-radius: 3px;
    background: #363636;
}

.glyph {
    font-size: 24px;
}

.caret {
    padding-right: 3px;
    border-right: 1px solid #ddd;
}

.script {
    font-family: "Liberation Serif", serif;
    font-size: 30px;
    font-style: italic;
}

/* ---------- panels ---------- */
.panels {
    flex: none;
    width: 429px;
    display: flex;
    flex-direction: column;
    border-left: 2px solid #363636;
}

.panel {
    border-bottom: 3px solid #333;
}

.color-body {
    display: flex;
    height: 318px;
    padding: 11px 25px 9px 14px;
}

.color-body .swatches {
    width: 43px;
    margin: 5px 10px 0 0;
}

.color-field {
    width: 281px;
    background:
        linear-gradient(to top, #000, transparent),
        linear-gradient(to right, #fff, #ff7700);
}

.hue {
    position: relative;
    width: 29px;
    margin-left: auto;
    background: linear-gradient(#f00, #f0f 17%, #00f 33%, #0ff 50%, #0f0 67%, #ff0 83%, #f00);
}

.hue i {
    position: absolute;
    left: -13px;
    top: 270px;
    border: solid transparent;
    border-width: 5px 0 5px 10px;
    border-left-color: #e8e8e8;
}

.props-head {
    display: flex;
    align-items: center;
    gap: 10px;
    height: 52px;
    padding-left: 17px;
    border-bottom: 2px solid #454545;
    color: #848484;
}

.dark-btn {
    display: flex;
    align-items: center;
    justify-content: center;
    width: 33px;
    height: 33px;
    border-radius: 3px;
    background: #383838;
    color: #ddd;
}

.props-body {
    display: flex;
    justify-content: space-between;
    height: 276px;
}

.props-grid {
    display: grid;
    grid-template-columns: 29px 91px 37px 20px 91px;
    grid-template-rows: 38px 31px;
    gap: 7px 12px;
    align-items: center;
    padding: 11px 0 0 6px;
    align-self: flex-start;
    color: #8c8c8c;
    font-size: 16px;
}

.props-grid label {
    text-align: right;
}

.props-grid input {
    width: 91px;
    height: 31px;
    padding-left: 4px;
    border: 1px solid #666;
    background: #454545;
    color: #777;
}

.dark-btn.link {
    width: 37px;
    height: 37px;
}

.props-scroll {
    width: 25px;
    height: 236px;
    background: #4b4b4b;
}

.layers {
    flex: 1;
    display: flex;
    flex-direction: column;
    min-height: 0;
    border-bottom: 0;
}

.filter-row, .blend-row, .lock-row {
    display: flex;
    align-items: center;
    padding-left: 6px;
    color: #8c8c8c;
}

.filter-row {
    height: 48px;
    gap: 18px;
    padding-top: 8px;
    border-bottom: 2px solid #454545;
    color: #ddd;
}

.filter-row .f {
    width: 18px;
    height: 18px;
}

.kind {
    width: 129px;
    margin-right: 7px;
}

.kind svg {
    width: 16px;
    height: 16px;
    margin-left: 12px;
}

.kind select {
    padding: 0 0 0 5px;
}

.toggle {
    width: 13px;
    height: 26px;
    margin-left: 9px;
    border-radius: 7px;
    background: radial-gradient(circle at 50% 6px, #ddd 6px, #444 7px);
}

.blend-row {
    height: 43px;
    border-bottom: 2px solid #454545;
}

.blend {
    width: 175px;
    margin-right: 13px;
}

.percent {
    display: flex;
    align-items: center;
    width: 86px;
    height: 28px;
    margin-left: 6px;
    border: 1px solid #636363;
    border-radius: 3px;
    background: #454545;
}

.percent input {
    width: 60px;
    height: 26px;
    margin-right: 8px;
    padding-left: 5px;
    border-right: 1px solid #636363;
    color: #777;
}

.lock-row {
    height: 44px;
    gap: 15px;
    padding-bottom: 4px;
}

.lock-row svg {
    width: 18px;
    height: 18px;
    color: #ddd;
}

.lock-label {
    padding-left: 4px;
}

.lock-row label {
    margin-right: -15px;
}

.layer-list {
    flex: 1;
    background: #4c4c4c;
    border-right: 25px solid #494949;
}

.layer {
    display: flex;
    align-items: center;
    height: 41px;
    background: #535353;
}

.eye {
    width: 20px;
    height: 14px;
    margin: 0 11px 0 14px;
}

.layer-name {
    flex: 1;
    display: flex;
    align-items: center;
    gap: 13px;
    height: 100%;
    padding-left: 3px;
    background: #6a6a6a;
    color: #f0f0f0;
}

.thumb {
    width: 54px;
    height: 34px;
}

.layers-foot {
    display: flex;
    align-items: center;
    justify-content: flex-end;
    gap: 22px;
    height: 37px;
    padding-right: 42px;
    border-top: 2px solid #424242;
}

.layers-foot svg {
    width: 19px;
    height: 18px;
}

.layers-foot em {
    font-size: 20px;
    font-style: italic;
}

.layers-foot .dim {
    color: #8c8c8c;
}

.drop {
    position: relative;
}

.drop::after {
    content: "";
    position: absolute;
    right: -6px;
    bottom: -3px;
    border: 4px solid transparent;
    border-top-color: #fff;
    border-bottom: 0;
}

/* ---------- right dock ---------- */
.side-dock {
    flex: none;
    width: 120px;
    border-left: 3px solid #3a3a3a;
    border-right: 1px solid #3d3d3d;
}

.side-dock button {
    display: grid;
    grid-template-columns: 36px 1fr;
    grid-template-rows: 10px 28px;
    gap: 12px 10px;
    align-content: start;
    align-items: center;
    width: 100%;
    height: 61px;
    padding-left: 12px;
    border-bottom: 2px solid #3d3d3d;
    text-align: left;
}

.side-dock .grip {
    grid-column: 1 / 3;
    margin: 4px auto 0 31px;
}

.side-dock svg {
    width: 36px;
    height: 28px;
}
```
